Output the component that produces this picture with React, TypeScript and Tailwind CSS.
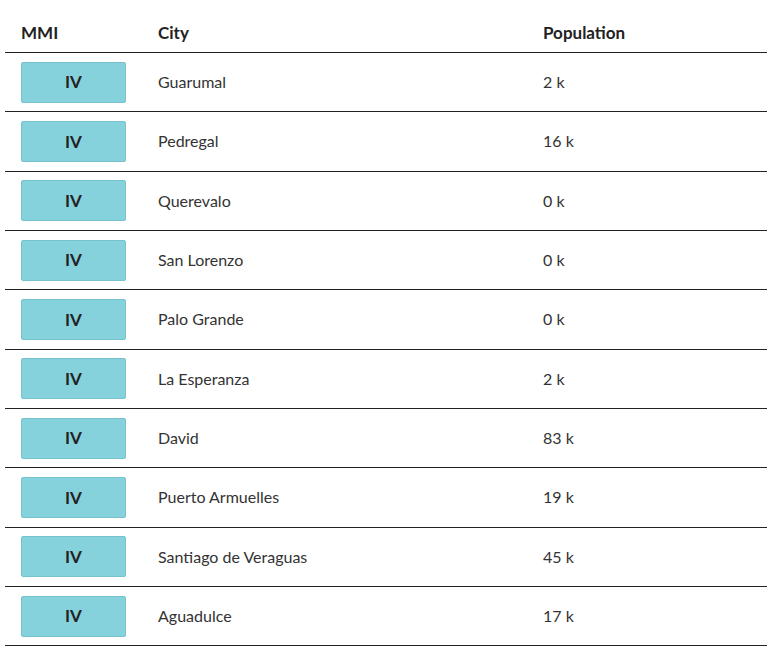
import React from "react";

const rows: [string, string][] = [
  ["Guarumal", "2 k"],
  ["Pedregal", "16 k"],
  ["Querevalo", "0 k"],
  ["San Lorenzo", "0 k"],
  ["Palo Grande", "0 k"],
  ["La Esperanza", "2 k"],
  ["David", "83 k"],
  ["Puerto Armuelles", "19 k"],
  ["Santiago de Veraguas", "45 k"],
  ["Aguadulce", "17 k"],
];

export default function App() {
  return (
    <div
      className="w-[773px] h-[664px] bg-white pl-[5px] pr-[6px] text-[16px] text-[#222]"
      style={{ fontFamily: "Lato, 'Noto Sans', sans-serif" }}
    >
      <div className="flex h-[53px] items-end pb-[7px] border-b border-[#222] font-bold text-[17px]">
        <div className="w-[137px] pl-[16px]">MMI</div>
        <div className="w-[385px] pl-[16px]">City</div>
        <div className="flex-1 pl-[16px]">Population</div>
      </div>
      {rows.map(([city, pop]) => (
        <div
          key={city}
          className="flex h-[59.33px] items-center border-b border-[#222]"
        >
          <div className="w-[137px] pl-[16px]">
            <div className="flex h-[41px] w-[105px] items-center justify-center rounded-[2px] border border-[#76c2ce] bg-[#85d1dc] font-bold text-[17px]">
              IV
            </div>
          </div>
          <div className="w-[385px] pl-[16px] text-[#333]">{city}</div>
          <div className="flex-1 pl-[16px] text-[#333]">{pop}</div>
        </div>
      ))}
    </div>
  );
}
